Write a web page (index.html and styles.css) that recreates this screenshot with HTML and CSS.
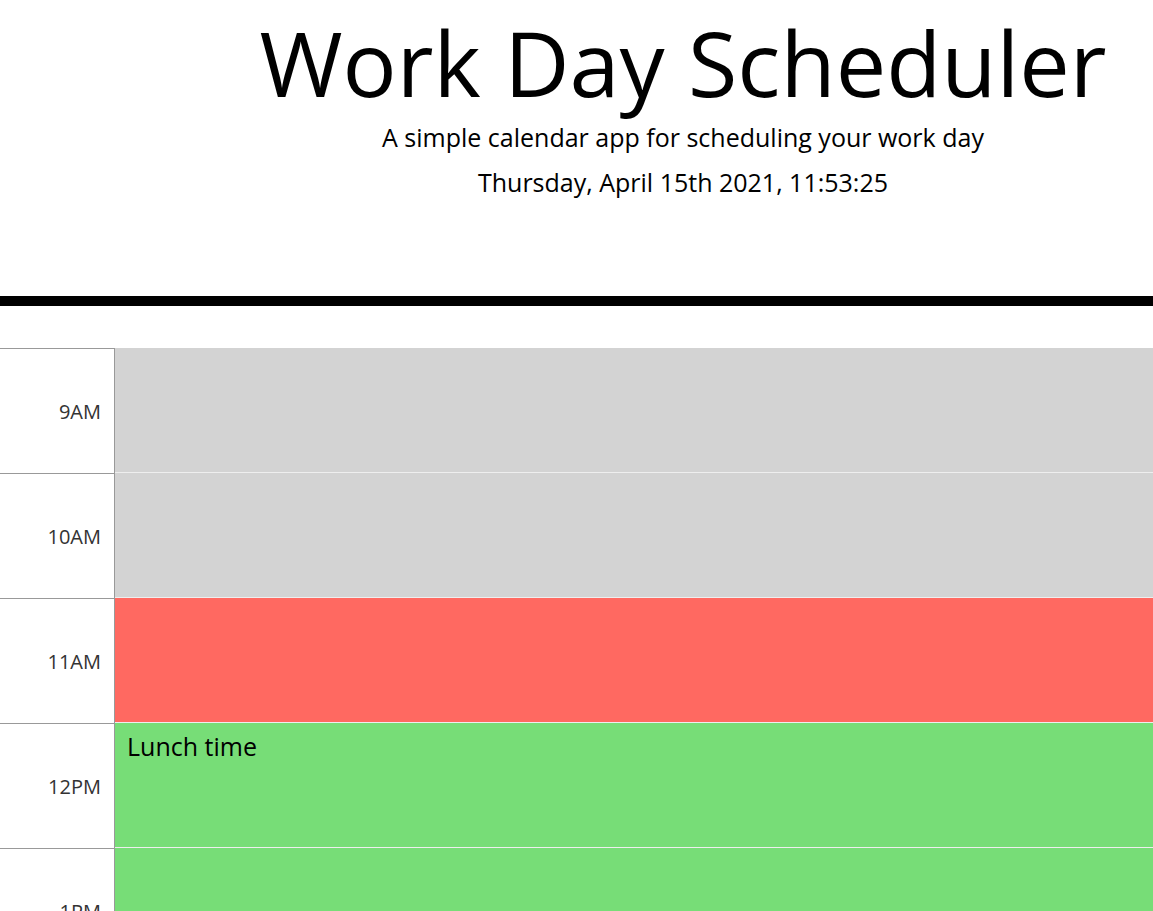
FILE: index.html
```html
<!DOCTYPE html>
<html lang="en">
<head>
<meta charset="utf-8">
<title>Work Day Scheduler</title>
<link rel="stylesheet" href="styles.css">
</head>
<body>
<div class="page">
  <header class="jumbotron">
    <h1 class="display">Work Day Scheduler</h1>
    <p class="lead">A simple calendar app for scheduling your work day</p>
    <p class="current-day">Thursday, April 15th 2021, 11:53:25</p>
  </header>
  <main class="container">
    <div class="time-block">
      <div class="hour">9AM</div>
      <textarea class="description past"></textarea>
      <button class="save-btn" aria-label="save"></button>
    </div>
    <div class="time-block">
      <div class="hour">10AM</div>
      <textarea class="description past"></textarea>
      <button class="save-btn" aria-label="save"></button>
    </div>
    <div class="time-block">
      <div class="hour">11AM</div>
      <textarea class="description present"></textarea>
      <button class="save-btn" aria-label="save"></button>
    </div>
    <div class="time-block">
      <div class="hour">12PM</div>
      <textarea class="description future">Lunch time</textarea>
      <button class="save-btn" aria-label="save"></button>
    </div>
    <div class="time-block">
      <div class="hour">1PM</div>
      <textarea class="description future"></textarea>
      <button class="save-btn" aria-label="save"></button>
    </div>
    <div class="time-block">
      <div class="hour">2PM</div>
      <textarea class="description future"></textarea>
      <button class="save-btn" aria-label="save"></button>
    </div>
  </main>
</div>
</body>
</html>
```

FILE: styles.css
```css
html, body {
  margin: 0;
  padding: 0;
  overflow: hidden;
  background: #fff;
}

body {
  font-family: "Open Sans", "Noto Sans", sans-serif;
  color: #000;
}

.page {
  width: 1366px;
}

.jumbotron {
  text-align: center;
  padding: 8px 0 96px;
  border-bottom: 10px solid #000;
}

.display {
  font-size: 90px;
  font-weight: 400;
  line-height: 108px;
  margin: 0;
}

.lead {
  font-size: 25px;
  line-height: 36px;
  margin: 3px 0 0;
}

.current-day {
  font-size: 25px;
  line-height: 36px;
  margin: 9px 0 0;
}

.container {
  margin-top: 42px;
}

.time-block {
  display: flex;
  height: 125px;
}

.hour {
  width: 101px;
  flex: none;
  padding-right: 13px;
  display: flex;
  align-items: center;
  justify-content: flex-end;
  font-size: 20px;
  color: #333;
  border-top: 1px solid #999;
  border-right: 1px solid #999;
}

.description {
  flex: 1;
  margin: 0;
  border: none;
  border-bottom: 1px solid #eee;
  resize: none;
  padding: 5px 12px;
  font-family: "Open Sans", "Noto Sans", sans-serif;
  font-size: 25px;
  line-height: 1.5;
  color: #000;
  outline: none;
}

.past { background: #d3d3d3; }
.present { background: #ff6961; }
.future { background: #77dd77; }

.save-btn {
  width: 120px;
  flex: none;
  border: none;
  background: #06aed5;
  border-radius: 0 15px 15px 0;
}
```
